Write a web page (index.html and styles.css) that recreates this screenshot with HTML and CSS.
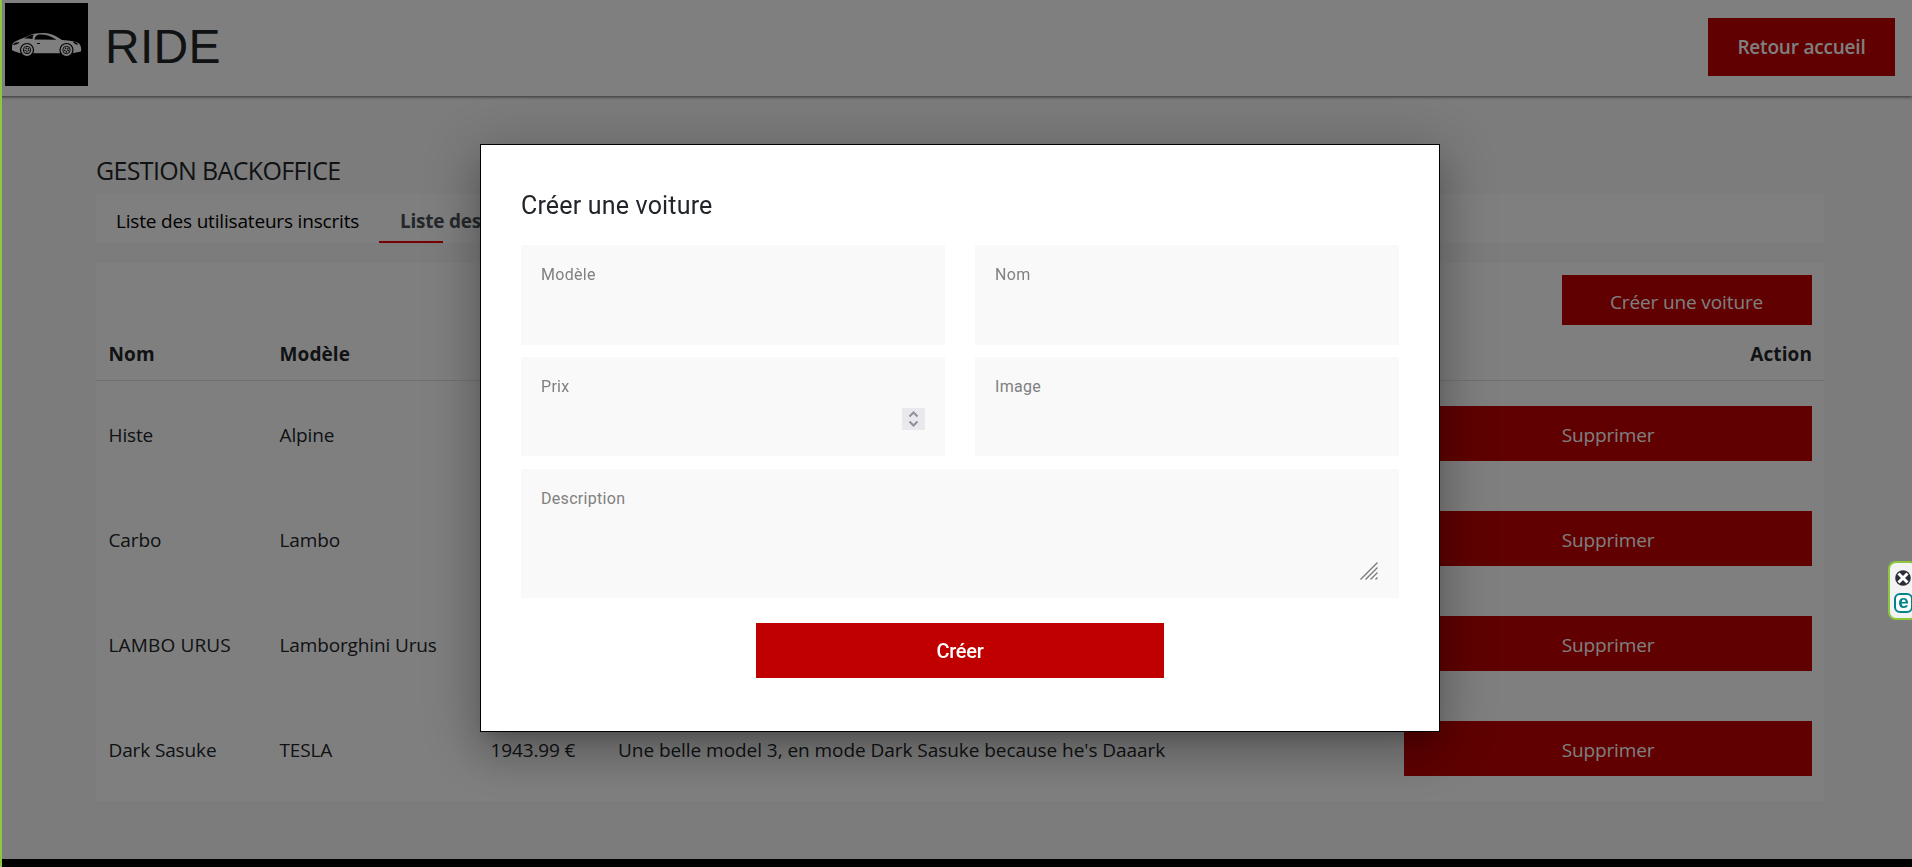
FILE: index.html
```html
<!DOCTYPE html>
<html lang="fr">
<head>
<meta charset="utf-8">
<title>RIDE - Gestion backoffice</title>
<link rel="stylesheet" href="styles.css">
</head>
<body>
<div class="page">
  <header class="header">
    <div class="brand">
      <svg class="logo" viewBox="0 0 83 83" aria-hidden="true">
        <rect width="83" height="83" fill="#000"/>
        <path fill="#fff" d="M7 44.500C7 41 8 39.500 11 38C17 35.500 20 34.500 24 32.500C29 30.200 34 29.700 40 30C46 30.300 51 33 57 37C65 37.300 72 38.500 74.500 41C76 43 76.500 46 76 48.500L67.500 50.300H56L28 50.300H15L8.500 48C7 47.500 6.700 46.500 7 44.500Z"/>
        <path fill="#000" d="M29.500 36.500C30 34 31 32.500 33 31.700C39 30.700 45 32.500 51.500 36.700ZM19 35.500C22 34 24 32.500 28.500 31.500C28 33 27.500 34.500 27.500 36C25 35.500 22 35.500 19 35.500ZM8 42C9 39.500 12 39 14.500 39.200C13 41 11 42 8 42ZM68 38.800C71 39 72.500 40 73 41.800C70.500 41.600 69 40.500 68 38.800ZM32 40H35V41H32Z"/>
        <g fill="#fff" stroke="#000" stroke-width="1.200"><circle cx="22" cy="47" r="6.500"/><circle cx="61.500" cy="47" r="6.500"/></g>
        <g fill="#fff" stroke="#000" stroke-width=".9"><circle cx="22" cy="47" r="3.700"/><circle cx="61.500" cy="47" r="3.700"/></g>
        <g fill="none" stroke="#000" stroke-width="1.600" stroke-dasharray="1 1"><circle cx="22" cy="47" r="1.700"/><circle cx="61.500" cy="47" r="1.700"/></g>
      </svg>
      <span class="brand-name">RIDE</span>
    </div>
    <button class="btn btn-home">Retour accueil</button>
  </header>
  <main class="main">
    <h1 class="title">GESTION BACKOFFICE</h1>
    <nav class="tabs">
      <a class="tab tab-users">Liste des utilisateurs inscrits</a>
      <a class="tab tab-active">Liste des voitures</a>
    </nav>
    <section class="card">
      <div class="toolbar"><button class="btn btn-new">Créer une voiture</button></div>
      <div class="row row-head"><span>Nom</span><span>Modèle</span><span>Prix</span><span>Description</span><span class="action">Action</span></div>
      <div class="row"><span>Histe</span><span>Alpine</span><span></span><span></span><button class="btn btn-delete">Supprimer</button></div>
      <div class="row"><span>Carbo</span><span>Lambo</span><span></span><span></span><button class="btn btn-delete">Supprimer</button></div>
      <div class="row"><span class="name-caps">LAMBO URUS</span><span>Lamborghini Urus</span><span></span><span></span><button class="btn btn-delete">Supprimer</button></div>
      <div class="row"><span>Dark Sasuke</span><span>TESLA</span><span>1943.99 €</span><span class="desc">Une belle model 3, en mode Dark Sasuke because he's Daaark</span><button class="btn btn-delete">Supprimer</button></div>
    </section>
  </main>
  <footer class="footer"></footer>
</div>

<div class="overlay">
  <form class="modal">
    <h2 class="modal-title">Créer une voiture</h2>
    <div class="fields">
      <div class="field">Modèle</div>
      <div class="field">Nom</div>
      <div class="field field-number">Prix
        <svg class="spinner" viewBox="0 0 23 22"><path d="M7.500 8.500L11.500 4.500L15.500 8.500M7.500 13.500L11.500 17.500L15.500 13.500"/></svg>
      </div>
      <div class="field">Image</div>
      <div class="field field-text">Description
        <svg class="grip" viewBox="0 0 18 18"><path d="M.5 17.500L17.500 .5M5.500 17.500L17.500 5.500M10.500 17.500L17.500 10.500M15.500 17.500L17.500 15.500"/></svg>
      </div>
    </div>
    <button class="btn-submit" type="button">Créer</button>
  </form>
</div>

<div class="edge"></div>
<div class="widget">
  <svg width="16" height="16" viewBox="0 0 16 16"><circle cx="8" cy="8" r="7.800" fill="#2b2d38"/><path d="M3.500 3.500L12.500 12.500M12.500 3.500L3.500 12.500" stroke="#fff" stroke-width="3"/></svg>
  <span class="widget-e">e</span>
</div>
</body>
</html>
```
FILE: styles.css
```css
* { box-sizing: border-box; }

body {
  margin: 0;
  height: 867px;
  overflow: hidden;
  background: #f9f9f9;
  color: #212529;
  font-family: "Segoe UI", "Open Sans", "Noto Sans", sans-serif;
  font-size: 19px;
}

button { border: 0; padding: 0; font: inherit; letter-spacing: inherit; }

.page { display: flex; flex-direction: column; height: 867px; }

.header {
  flex: none;
  display: flex;
  justify-content: space-between;
  height: 96px;
  padding: 3px 17px 0 5px;
  background: #fff;
  box-shadow: 0 1px 3px rgba(0, 0, 0, .6);
}
.brand { display: flex; gap: 17px; }
.logo { width: 83px; height: 83px; }
.brand-name { font: 48px/87px "Liberation Sans", Arial, sans-serif; letter-spacing: .3px; }

.btn { background: #c00000; color: #fff; }
.btn-home { width: 187px; height: 58px; margin-top: 15px; font-weight: 600; letter-spacing: -.2px; }

.main { flex: none; height: 763px; padding: 60px 88px 0 96px; }
.title { margin: 0; height: 38px; font-size: 25px; line-height: 28px; font-weight: 400; letter-spacing: -.65px; }

.tabs { display: flex; height: 49px; background: #fff; line-height: 54px; }
.tab { padding: 0 20px; color: #000; white-space: nowrap; }
.tab-users { width: 283px; letter-spacing: -.18px; }
.tab-active {
  padding-left: 21px;
  color: #495057;
  font-weight: 700;
  letter-spacing: -.25px;
  background: linear-gradient(#f00000, #f00000) 0 100% / 64px 2px no-repeat;
}

.card { margin-top: 20px; background: #fff; }
.toolbar { display: flex; justify-content: flex-end; height: 62px; padding: 12px 12px 0 0; }
.btn-new { width: 250px; height: 50px; padding: 4px 1px 0 0; letter-spacing: -.12px; }
.row {
  display: grid;
  grid-template-columns: 171px 211px 127px 1fr 408px;
  align-items: center;
  height: 105px;
  padding: 0 12px 0 12.5px;
  letter-spacing: -.13px;
}
.row > span { padding-top: 3px; white-space: nowrap; }
.row .name-caps { letter-spacing: .15px; }
.row .desc { padding-left: .5px; letter-spacing: -.05px; }
.row-head { height: 56px; border-bottom: 1px solid #dee2e6; font-weight: 700; letter-spacing: .1px; }
.action { text-align: right; }
.btn-delete { height: 55px; padding-top: 3px; }
.footer { flex: 1; background: #000; }

.overlay { position: fixed; inset: 0; background: rgba(0, 0, 0, .5); }
.modal {
  width: 960px;
  height: 588px;
  margin: 144px 0 0 480px;
  padding: 40px;
  border: 1px solid #000;
  background: #fff;
  box-shadow: 0 11px 15px -7px rgba(0, 0, 0, .2), 0 24px 38px 3px rgba(0, 0, 0, .14), 0 9px 56px 10px rgba(0, 0, 0, .18);
  font-family: Roboto, sans-serif;
}
.modal-title { margin: 0; height: 60px; font-size: 25px; line-height: 42px; font-weight: 400; letter-spacing: .18px; }
.fields {
  display: grid;
  grid-template-columns: 424px 424px;
  grid-template-rows: 100px 99px 130px;
  gap: 12px 30px;
}
.field {
  display: flex;
  justify-content: space-between;
  padding: 20px;
  background: #f9f9f9;
  color: #808080;
  font-size: 16px;
  line-height: 19px;
  letter-spacing: .3px;
}
.field-text { grid-column: 1 / 3; margin-top: 1px; }
.spinner { width: 23px; height: 22px; margin-top: 31px; background: #e9e9ed; fill: none; stroke: #8f8f9d; stroke-width: 2; }
.grip { width: 18px; height: 18px; margin: 73px 1px 0 0; fill: none; stroke: #777; stroke-width: 1.300; }
.btn-submit {
  display: block;
  width: 408px;
  height: 55px;
  margin: 25px auto 0;
  background: #c00000;
  color: #fff;
  font-size: 20px;
  font-weight: 500;
  letter-spacing: -.3px;
}

.edge { position: fixed; inset: 0 auto 0 0; width: 2px; background: #8dc63f; }
.widget {
  position: fixed;
  top: 561px;
  right: -6px;
  width: 30px;
  height: 59px;
  padding: 7px 0 0 4px;
  border: 2px solid #8dc63f;
  border-radius: 8px;
  background: #f3f3f3;
}
.widget svg { display: block; margin-left: 1px; }
.widget-e {
  display: block;
  width: 19px;
  height: 20px;
  margin: 7px 0 0;
  border: 2px solid #008489;
  border-radius: 6px;
  background: #fff;
  color: #008489;
  font: bold 19px/14px "Liberation Sans", Arial, sans-serif;
  text-align: center;
}
```
